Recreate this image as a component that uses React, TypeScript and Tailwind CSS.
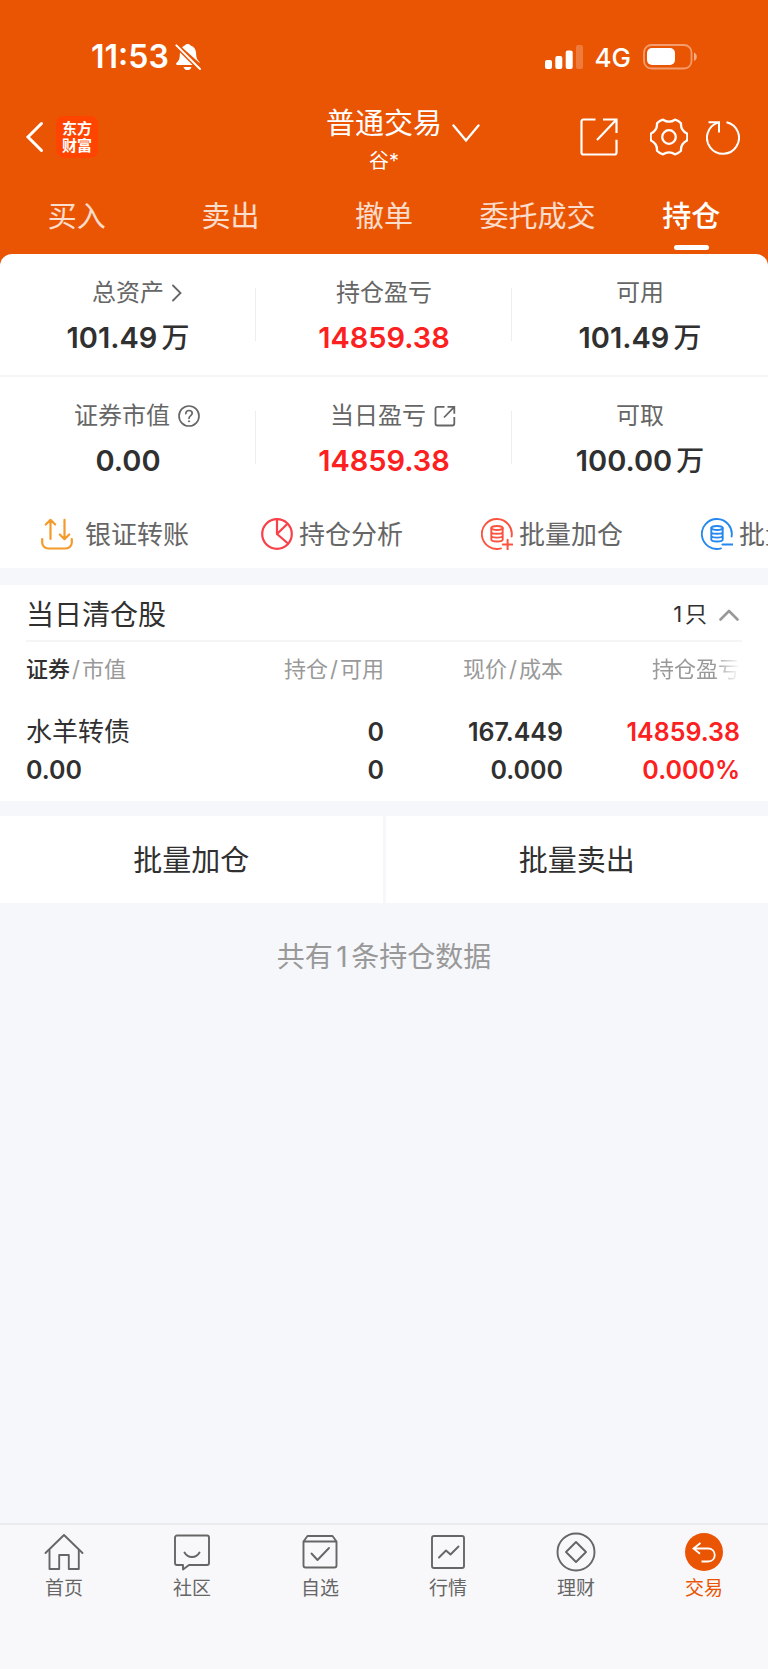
import { useState } from 'react';
import type { ReactNode } from 'react';

const stroke = {
    fill: 'none',
    stroke: 'currentColor',
    strokeLinecap: 'round' as const,
    strokeLinejoin: 'round' as const,
};

const BellOffIcon = () => (
    <svg width="26" height="28" viewBox="0 0 26 28" fill="currentColor" aria-hidden="true">
        <path d="M5 6.5 21.8 22H2.4C1 22 .8 20.600 1.600 19.800c2-1.800 2.900-3.400 3.100-6.300l.3-4.300z" />
        <path d="M7 4.600C8 3.500 9 2.900 9.800 2.600 10.200 1.700 11.300 1 12.700 1s2.500.7 2.900 1.600c3.200 1 5.100 3.600 5.400 6.800.3 4.500.6 6.600 3 9 .5.500.7 1 .6 1.600z" />
        <path d="M8.500 24h8c-.5 1.900-2 3.100-4 3.100s-3.500-1.200-4-3.100z" />
        <path d="M1.800 2.800 24.600 25.600" stroke="#ea5504" strokeWidth="5" />
        <path d="M1.400 2.400 25 26" stroke="currentColor" strokeWidth="2" strokeLinecap="round" />
    </svg>
);

const SignalIcon = () => (
    <svg width="38" height="24" viewBox="0 0 38 24" fill="currentColor" aria-hidden="true">
        <rect x="0" y="15" width="7" height="9" rx="2" />
        <rect x="10.300" y="11" width="7" height="13" rx="2" />
        <rect x="20.700" y="5.500" width="7" height="18.500" rx="2" />
        <rect x="31" y="0" width="7" height="24" rx="2" opacity=".22" />
    </svg>
);

const BatteryIcon = () => (
    <svg width="54" height="26" viewBox="0 0 54 26" aria-hidden="true">
        <rect x="1" y="1" width="47.500" height="23.500" rx="7.500" fill="none" stroke="#fff" strokeOpacity=".42" strokeWidth="1.800" />
        <rect x="4" y="4" width="28" height="17" rx="5" fill="#fff" />
        <path d="M51 8.500c1.800.7 2.800 2.300 2.800 4.200S52.800 16.200 51 16.900z" fill="#fff" fillOpacity=".5" />
    </svg>
);

const BackIcon = () => (
    <svg width="20" height="32" viewBox="0 0 20 32" {...stroke} strokeWidth="3" strokeLinejoin="miter" aria-hidden="true">
        <path d="M17.500 2.500 4 16l13.500 13.500" />
    </svg>
);

const ShareIcon = () => (
    <svg width="38" height="38" viewBox="0 0 38 38" {...stroke} strokeWidth="2.200" strokeLinecap="butt" aria-hidden="true">
        <path d="M15.500 1.500H3.500a2 2 0 0 0-2 2v31a2 2 0 0 0 2 2h31a2 2 0 0 0 2-2V21.800" />
        <path d="M23 1.500h13.500V15M36.500 1.500 17 22" strokeLinejoin="miter" />
    </svg>
);

const GearIcon = () => (
    <svg width="38" height="38" viewBox="0 0 38 38" {...stroke} strokeWidth="2.300" aria-hidden="true">
        <path d="M37 22.500Q30.500 25.700 31 32.800Q28.500 35.400 25 36.300Q19 32.300 13 36.300Q9.500 35.400 7 32.800Q7.500 25.700 1 22.500Q.2 19 1 15.500Q7.500 12.300 7 5.200Q9.500 2.600 13 1.700Q19 5.700 25 1.700Q28.500 2.600 31 5.200Q30.500 12.300 37 15.500Q37.800 19 37 22.500Z" />
        <circle cx="19" cy="19" r="6.800" />
    </svg>
);

const RefreshIcon = () => (
    <svg width="34" height="36" viewBox="0 0 34 36" {...stroke} strokeWidth="2" strokeLinecap="butt" aria-hidden="true">
        <path d="M20.500 3.200a16 16 0 1 1-8.500.400" />
        <path d="M2.500 3.200h10.500V13.500" strokeLinejoin="miter" />
    </svg>
);

const ChevronDownIcon = () => (
    <svg width="28" height="20" viewBox="0 0 28 20" {...stroke} strokeWidth="2.300" strokeLinejoin="miter" aria-hidden="true">
        <path d="M1.500 1.500 14 16.500 26.500 1.500" />
    </svg>
);

const ChevronRightIcon = () => (
    <svg width="10" height="18" viewBox="0 0 10 18" {...stroke} strokeWidth="1.800" strokeLinejoin="miter" aria-hidden="true">
        <path d="M1 1.500 8.500 9 1 16.500" />
    </svg>
);

const HelpIcon = () => (
    <svg width="22" height="22" viewBox="0 0 22 22" {...stroke} strokeWidth="1.700" aria-hidden="true">
        <circle cx="11" cy="11" r="10" />
        <path d="M7.800 8.600c0-1.900 1.400-3.100 3.200-3.100s3.200 1.100 3.200 2.800c0 2.300-3.200 2.400-3.200 5" strokeWidth="1.700" />
        <circle cx="11" cy="16.300" r=".6" fill="currentColor" strokeWidth="1" />
    </svg>
);

const DetailIcon = () => (
    <svg width="22" height="22" viewBox="0 0 22 22" {...stroke} strokeWidth="1.800" strokeLinecap="butt" aria-hidden="true">
        <path d="M10.500 1.800H3.500a2 2 0 0 0-2 2v14.700a2 2 0 0 0 2 2h14.800a2 2 0 0 0 2-2V12" />
        <path d="M13.500 1.800h6.800v7M20.300 1.800 10 12.500" strokeLinejoin="miter" />
    </svg>
);

const TransferIcon = () => (
    <svg width="32" height="32" viewBox="0 0 32 32" {...stroke} strokeWidth="2.200" className="text-[#f39a2b]" aria-hidden="true">
        <path d="M1.200 21v3.500a6 6 0 0 0 6 6h17.600a6 6 0 0 0 6-6V21" />
        <path d="M9.500 21V2M4.800 6.500 9.500 1.800l4.700 4.700M23.500 1.800V21M18.800 16.500l4.700 4.700 4.700-4.700" />
    </svg>
);

const PieIcon = () => (
    <svg width="32" height="32" viewBox="0 0 32 32" {...stroke} strokeWidth="2.200" className="text-[#f94048]" aria-hidden="true">
        <circle cx="16" cy="16" r="14.800" />
        <path d="M16 1v15l11 9.500M16 16 26.500 5.800" />
    </svg>
);

const CoinsIcon = ({ minus = false }: { minus?: boolean }) => (
    <svg
        width="32"
        height="32"
        viewBox="0 0 32 32"
        {...stroke}
        strokeWidth="1.900"
        className={minus ? 'text-[#2688ef]' : 'text-[#fb5340]'}
        aria-hidden="true"
    >
        <path d="M30.600 18.500A15 15 0 1 0 20 30.400" />
        <ellipse cx="16" cy="10" rx="5.700" ry="2" />
        <path d="M10.300 10v11.500c0 2.600 11.400 2.600 11.400 0V10M10.300 14c0 2.400 11.400 2.400 11.400 0M10.300 17.800c0 2.400 11.400 2.400 11.400 0" />
        {minus ? <path d="M21.500 26.500h10" strokeWidth="2.200" /> : <path d="M21.800 26.500h9.600M26.600 21.700v9.600" strokeWidth="2" />}
    </svg>
);

const HomeIcon = () => (
    <svg width="40" height="40" viewBox="0 0 40 40" {...stroke} strokeWidth="1.900" aria-hidden="true">
        <path d="M1.500 21 20 3l18.500 18" />
        <path d="M5.500 18v19h9.700V23h9.600v14h10V18" />
    </svg>
);

const CommunityIcon = () => (
    <svg width="40" height="40" viewBox="0 0 40 40" {...stroke} strokeWidth="1.900" aria-hidden="true">
        <path d="M5 3.500h30a2 2 0 0 1 2 2V31a2 2 0 0 1-2 2H17l-6 4.500V33H5a2 2 0 0 1-2-2V5.500a2 2 0 0 1 2-2z" />
        <path d="M12.500 20.500c3.500 6 11.500 6 15 0" />
    </svg>
);

const WatchlistIcon = () => (
    <svg width="40" height="40" viewBox="0 0 40 40" {...stroke} strokeWidth="1.900" aria-hidden="true">
        <path d="M3.500 9.500 7.500 4h25l4 5.500V33.500a2 2 0 0 1-2 2h-29a2 2 0 0 1-2-2zM3.500 9.500h33" />
        <path d="M11.500 21.500 17.500 28 29 16" />
    </svg>
);

const MarketIcon = () => (
    <svg width="40" height="40" viewBox="0 0 40 40" {...stroke} strokeWidth="1.900" aria-hidden="true">
        <rect x="4" y="4" width="32" height="32" rx="2" />
        <path d="M11 25.500 18 18.500 22.500 22.500 30.500 14.500" />
    </svg>
);

const WealthIcon = () => (
    <svg width="40" height="40" viewBox="0 0 40 40" {...stroke} strokeWidth="1.900" aria-hidden="true">
        <circle cx="20" cy="20" r="18.500" />
        <path d="M20 10 30 20 20 30 10 20z" />
    </svg>
);

const TradeIcon = () => (
    <svg width="40" height="40" viewBox="0 0 40 40" aria-hidden="true">
        <circle cx="20" cy="20" r="19" fill="#ea5504" />
        <path d="M16.500 11 9.500 16.500l6.500 5.200M9.500 16.500H24c9 0 9 13 0 13h-6.500" fill="none" stroke="#fff" strokeWidth="1.800" />
    </svg>
);

const tabs = ['买入', '卖出', '撤单', '委托成交', '持仓'];

const stats: { label: string; value: string; unit?: string; red?: boolean; icon?: ReactNode }[][] = [
    [
        { label: '总资产', value: '101.49', unit: '万', icon: <ChevronRightIcon /> },
        { label: '持仓盈亏', value: '14859.38', red: true },
        { label: '可用', value: '101.49', unit: '万' },
    ],
    [
        { label: '证券市值', value: '0.00', icon: <HelpIcon /> },
        { label: '当日盈亏', value: '14859.38', red: true, icon: <DetailIcon /> },
        { label: '可取', value: '100.00', unit: '万' },
    ],
];

const actions = [
    { label: '银证转账', icon: <TransferIcon />, gap: 'gap-3' },
    { label: '持仓分析', icon: <PieIcon />, gap: 'gap-1.5' },
    { label: '批量加仓', icon: <CoinsIcon />, gap: 'gap-1.5' },
    { label: '批量卖出', icon: <CoinsIcon minus />, gap: 'gap-1.5' },
];

const navItems = [
    { label: '首页', icon: <HomeIcon /> },
    { label: '社区', icon: <CommunityIcon /> },
    { label: '自选', icon: <WatchlistIcon /> },
    { label: '行情', icon: <MarketIcon /> },
    { label: '理财', icon: <WealthIcon /> },
    { label: '交易', icon: <TradeIcon />, active: true },
];

const Slash = () => <span className="mx-0.5">/</span>;

const App = () => {
    const [activeTab, setActiveTab] = useState('持仓');
    const [open, setOpen] = useState(true);

    return (
        <div className="flex min-h-screen flex-col bg-[#f6f7fa] font-['Inter','Noto_Sans_CJK_SC',sans-serif] text-[#303030]">
            <header className="bg-[#ea5504] text-white">
                {/* Status bar */}
                <div className="flex h-[100px] items-center justify-between pt-[14px] pr-[71px] pl-[91px]">
                    <div className="flex items-center gap-1.5">
                        <span className="text-[32px] font-semibold">11:53</span>
                        <BellOffIcon />
                    </div>
                    <div className="flex items-center gap-3">
                        <SignalIcon />
                        <span className="text-[26px] font-medium">4G</span>
                        <BatteryIcon />
                    </div>
                </div>

                {/* Title bar */}
                <div className="grid h-[74px] grid-cols-[1fr_auto_1fr] items-center">
                    <div className="flex items-center gap-3 pl-6">
                        <button aria-label="返回">
                            <BackIcon />
                        </button>
                        <div className="flex h-[42px] w-[42px] flex-col items-center justify-center rounded-lg bg-[#ff4400] text-[15px] leading-[17px] font-bold">
                            <span>东方</span>
                            <span>财富</span>
                        </div>
                    </div>
                    <button className="relative flex flex-col items-center">
                        <span className="text-[29px] leading-[48px]">普通交易</span>
                        <span className="text-xl leading-[26px]">谷*</span>
                        <span className="absolute top-6 left-full ml-2.5">
                            <ChevronDownIcon />
                        </span>
                    </button>
                    <div className="flex items-center justify-end pr-[28px]">
                        <button aria-label="分享" className="mr-8">
                            <ShareIcon />
                        </button>
                        <button aria-label="设置" className="mr-[18px]">
                            <GearIcon />
                        </button>
                        <button aria-label="刷新">
                            <RefreshIcon />
                        </button>
                    </div>
                </div>

                {/* Tabs */}
                <nav className="grid h-20 grid-cols-5">
                    {tabs.map((tab) => (
                        <button
                            key={tab}
                            onClick={() => setActiveTab(tab)}
                            className={`flex flex-col items-center justify-end gap-[13px] pb-1 text-[29px] leading-[30px] ${tab === activeTab ? 'font-medium text-white' : 'text-white/80'}`}
                        >
                            <span>{tab}</span>
                            <span className={`h-[5px] w-[35px] rounded-full ${tab === activeTab ? 'bg-white' : ''}`} />
                        </button>
                    ))}
                </nav>
            </header>

            {/* Account summary */}
            <div className="bg-[#ea5504]">
                <section className="overflow-hidden rounded-t-xl bg-white">
                    {stats.map((row, i) => (
                        <div key={i} className={`grid h-[123px] grid-cols-3 ${i === 0 ? 'border-b-2 border-[#f6f6f6]' : ''}`}>
                            {row.map((item, idx) => (
                                <div key={item.label} className="relative flex flex-col items-center pt-[22px]">
                                    <div className={`flex items-center gap-2 text-2xl leading-[34px] text-[#666] ${item.icon ? 'pl-[18px]' : ''}`}>
                                        {item.label}
                                        {item.icon}
                                    </div>
                                    <div className={`mt-2.5 flex items-center gap-1 text-[29px] leading-[36px] font-semibold ${item.red ? 'text-[#fc2020]' : ''}`}>
                                        {item.value}
                                        {item.unit && <span className="text-[28px] font-medium">{item.unit}</span>}
                                    </div>
                                    {idx < 2 && <div className="absolute top-[34px] right-0 h-[53px] w-px bg-[#eee]" />}
                                </div>
                            ))}
                        </div>
                    ))}

                    <div className="flex h-[68px] overflow-hidden">
                        {actions.map((action) => (
                            <button key={action.label} className={`flex w-[220px] shrink-0 items-center pl-[41px] text-[26px] whitespace-nowrap text-[#666] ${action.gap}`}>
                                <span className="shrink-0">{action.icon}</span>
                                {action.label}
                            </button>
                        ))}
                    </div>
                </section>
            </div>

            {/* Positions closed today */}
            <section className="mt-[17px] h-[216px] bg-white px-[26px]">
                <button
                    onClick={() => setOpen(!open)}
                    className="flex h-[57px] w-full items-center justify-between border-b-2 border-[#f5f5f6] pt-1 pr-[3px]"
                >
                    <span className="text-[28px]">当日清仓股</span>
                    <span className="flex items-center gap-3 text-[22px] [text-autospace:normal]">
                        1只
                        <svg width="20" height="12" viewBox="0 0 20 12" {...stroke} strokeWidth="2.600" className={open ? 'text-[#999]' : 'rotate-180 text-[#999]'} aria-hidden="true">
                            <path d="M1.500 10.500 10 2l8.500 8.500" />
                        </svg>
                    </span>
                </button>
                {open && (
                    <table className="w-full table-fixed text-right">
                        <thead className="text-[22px] text-[#999]">
                            <tr className="h-[54px]">
                                <th className="text-left font-normal">
                                    <span className="font-medium text-[#303030]">证券</span>
                                    <Slash />
                                    市值
                                </th>
                                <th className="font-normal">
                                    持仓
                                    <Slash />
                                    可用
                                </th>
                                <th className="font-normal">
                                    现价
                                    <Slash />
                                    成本
                                </th>
                                <th className="pr-0.5 font-normal">
                                    <span className="[mask-image:linear-gradient(to_right,black_70%,transparent)]">持仓盈亏</span>
                                </th>
                            </tr>
                        </thead>
                        <tbody className="text-[25px] leading-[38px] font-semibold">
                            <tr className="h-[103px]">
                                <td className="pt-1.5 text-left align-middle">
                                    <div className="text-[26px] font-normal">水羊转债</div>
                                    <div>0.00</div>
                                </td>
                                <td className="pt-1.5">
                                    <div>0</div>
                                    <div>0</div>
                                </td>
                                <td className="pt-1.5">
                                    <div>167.449</div>
                                    <div>0.000</div>
                                </td>
                                <td className="pt-1.5 pr-0.5 text-[#fc2020]">
                                    <div>14859.38</div>
                                    <div>0.000%</div>
                                </td>
                            </tr>
                        </tbody>
                    </table>
                )}
            </section>

            <div className="mt-[15px] grid h-[87px] grid-cols-2 gap-[3px] text-[29px]">
                <button className="bg-white pt-0.5">批量加仓</button>
                <button className="bg-white pt-0.5">批量卖出</button>
            </div>

            <p className="mt-[33px] text-center text-[28px] text-[#999] [text-autospace:normal]">共有1条持仓数据</p>

            {/* Bottom navigation */}
            <nav className="mt-auto grid h-[146px] grid-cols-6 items-start border-t-2 border-[#ebecf0] bg-[#f8f8fa]">
                {navItems.map((item) => (
                    <a key={item.label} href="#" className={`flex flex-col items-center pt-[7px] text-[19px] leading-7 ${item.active ? 'text-[#ea5504]' : 'text-[#666]'}`}>
                        {item.icon}
                        <span className="mt-[3px]">{item.label}</span>
                    </a>
                ))}
            </nav>
        </div>
    );
};

export default App;
